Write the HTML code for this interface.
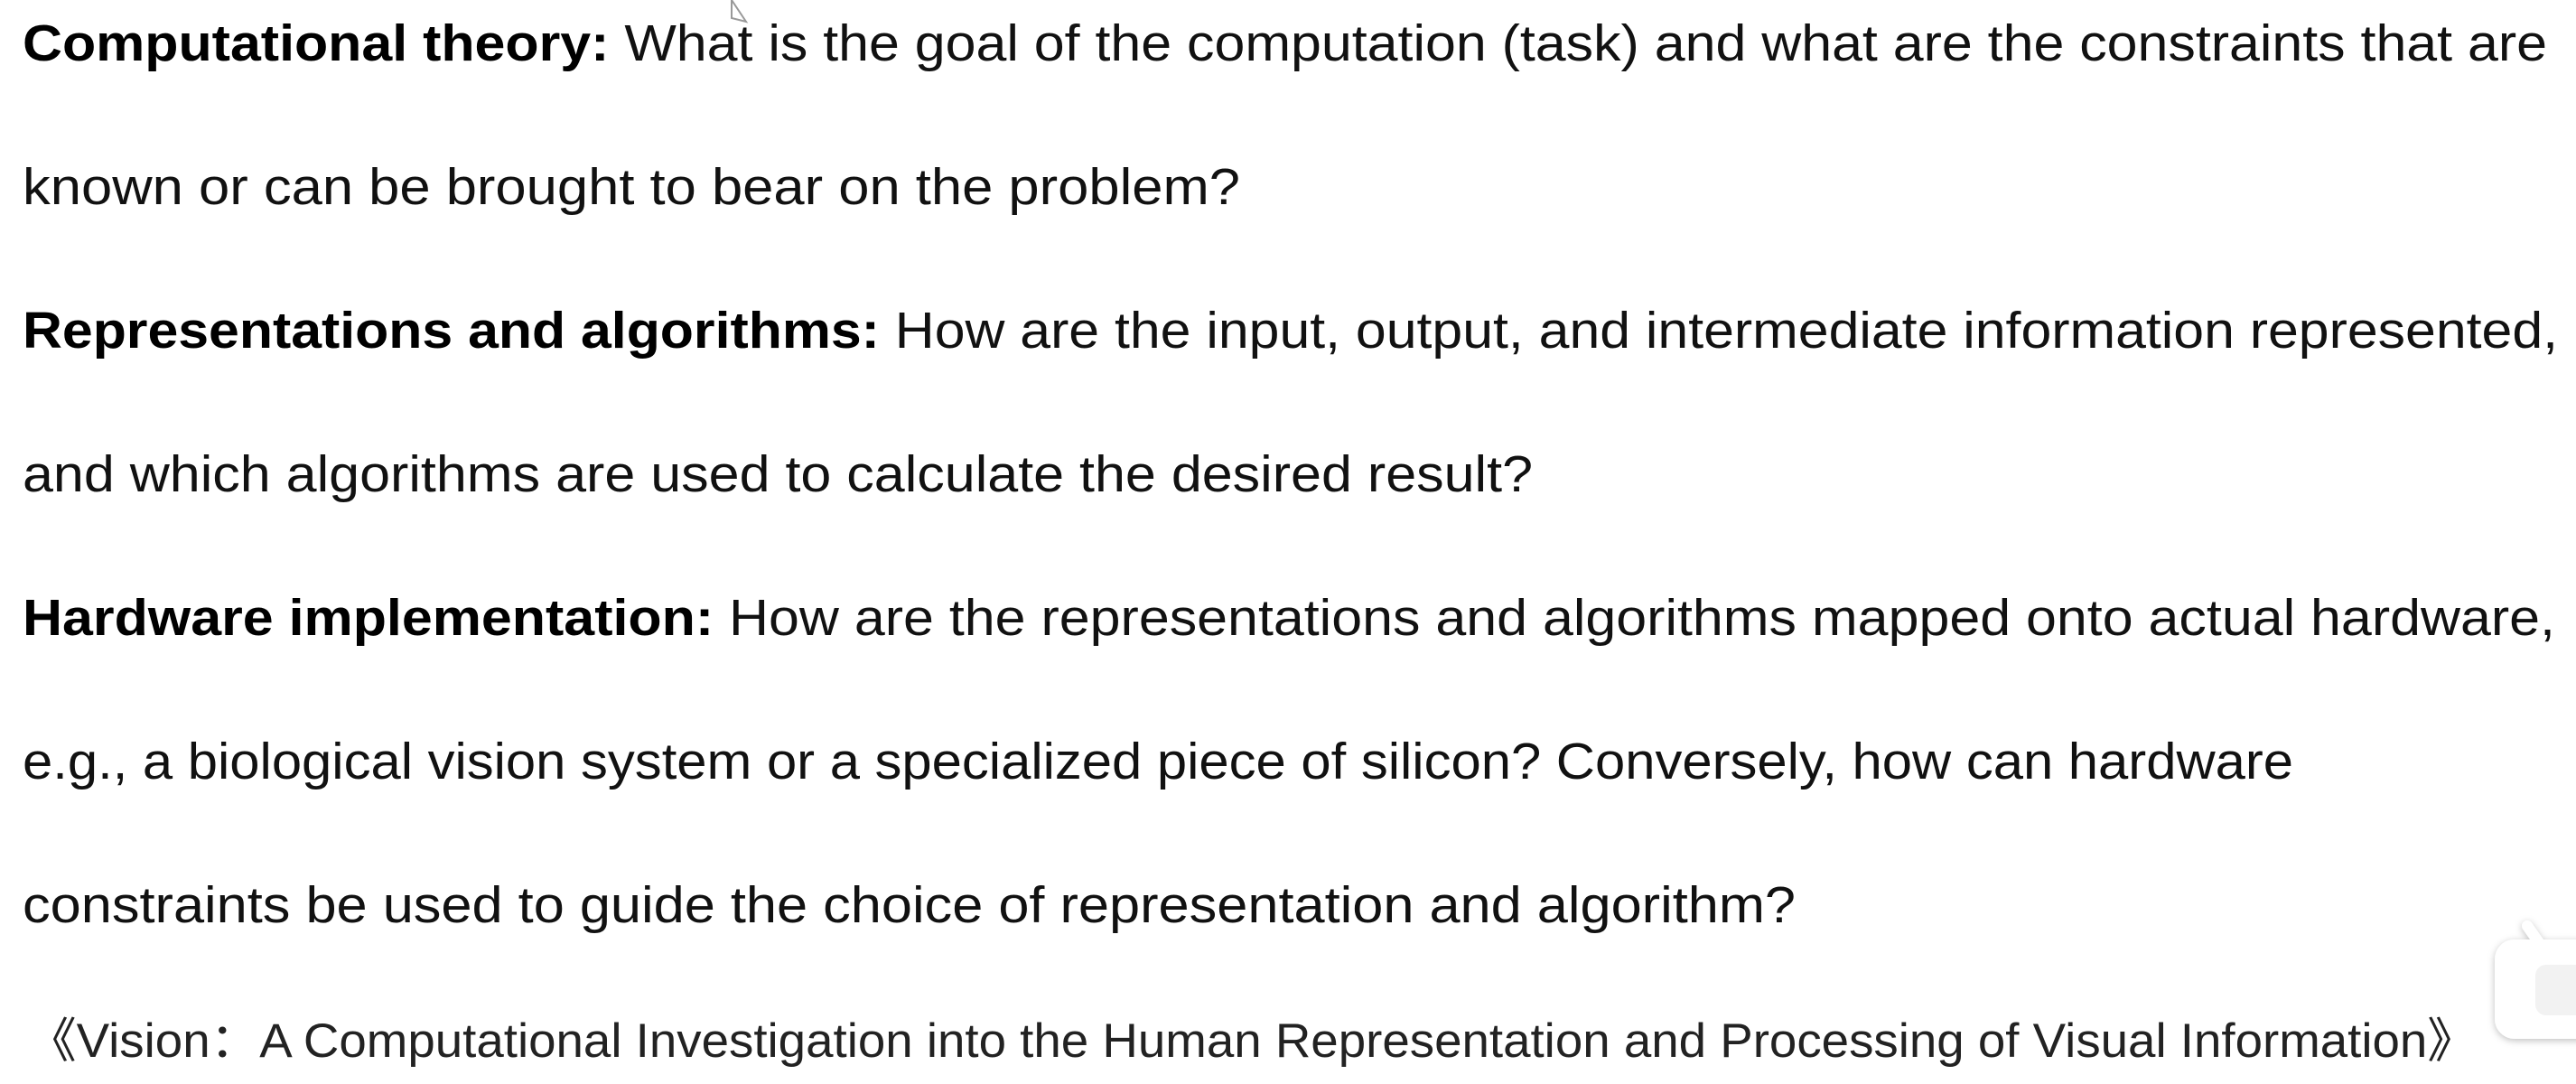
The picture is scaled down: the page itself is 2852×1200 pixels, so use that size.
<!DOCTYPE html>
<html><head><meta charset="utf-8"><style>
html,body{margin:0;padding:0;background:#fff;}
body{width:2852px;height:1200px;overflow:hidden;position:relative;}
svg{position:absolute;left:0;top:0;}
text{font-family:"Liberation Sans","Noto Sans CJK SC",sans-serif;fill:#111;}
.b{font-weight:bold;fill:#000;}
</style></head><body>
<svg width="2852" height="1200" viewBox="0 0 2852 1200">
<g font-size="57">
<text x="25" y="67" textLength="2795" lengthAdjust="spacingAndGlyphs"><tspan class="b">Computational theory:</tspan> What is the goal of the computation (task) and what are the constraints that are</text>
<text x="25" y="226" textLength="1348" lengthAdjust="spacingAndGlyphs">known or can be brought to bear on the problem?</text>
<text x="25" y="385" textLength="2807" lengthAdjust="spacingAndGlyphs"><tspan class="b">Representations and algorithms:</tspan> How are the input, output, and intermediate information represented,</text>
<text x="25" y="544" textLength="1672" lengthAdjust="spacingAndGlyphs">and which algorithms are used to calculate the desired result?</text>
<text x="25" y="703" textLength="2804" lengthAdjust="spacingAndGlyphs"><tspan class="b">Hardware implementation:</tspan> How are the representations and algorithms mapped onto actual hardware,</text>
<text x="25" y="862" textLength="2514" lengthAdjust="spacingAndGlyphs">e.g., a biological vision system or a specialized piece of silicon? Conversely, how can hardware</text>
<text x="25" y="1021" textLength="1963" lengthAdjust="spacingAndGlyphs">constraints be used to guide the choice of representation and algorithm?</text>
</g>
<text x="30" y="1170" font-size="53" textLength="2712" lengthAdjust="spacingAndGlyphs" style="fill:#222">《Vision：A Computational Investigation into the Human Representation and Processing of Visual Information》</text>
<path d="M810 0 L810 20 L826 24 Z" fill="none" stroke="#999" stroke-width="2"/>
<defs><filter id="sh" x="-30%" y="-30%" width="160%" height="160%"><feDropShadow dx="0" dy="2" stdDeviation="4" flood-color="#000" flood-opacity="0.25"/></filter></defs>
<g filter="url(#sh)">
<line x1="2798" y1="1025" x2="2812" y2="1045" stroke="#fff" stroke-width="12" stroke-linecap="round"/>
<rect x="2762" y="1040" width="120" height="110" rx="22" fill="#fff"/>
</g>
<rect x="2807" y="1068" width="60" height="56" rx="12" fill="#f2f2f2"/>
</svg>
</body></html>
